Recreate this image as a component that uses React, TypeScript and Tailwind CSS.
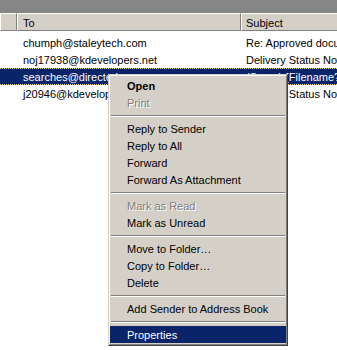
import React from "react";

type Item =
  | { kind: "item"; label: string; bold?: boolean; disabled?: boolean; active?: boolean }
  | { kind: "sep" };

const items: Item[] = [
  { kind: "item", label: "Open", bold: true },
  { kind: "item", label: "Print", disabled: true },
  { kind: "sep" },
  { kind: "item", label: "Reply to Sender" },
  { kind: "item", label: "Reply to All" },
  { kind: "item", label: "Forward" },
  { kind: "item", label: "Forward As Attachment" },
  { kind: "sep" },
  { kind: "item", label: "Mark as Read", disabled: true },
  { kind: "item", label: "Mark as Unread" },
  { kind: "sep" },
  { kind: "item", label: "Move to Folder\u2026" },
  { kind: "item", label: "Copy to Folder\u2026" },
  { kind: "item", label: "Delete" },
  { kind: "sep" },
  { kind: "item", label: "Add Sender to Address Book" },
  { kind: "sep" },
  { kind: "item", label: "Properties", active: true },
];

const rows = [
  { to: "chumph@staleytech.com", subject: "Re: Approved document" },
  { to: "noj17938@kdevelopers.net", subject: "Delivery Status Notification" },
  { to: "searches@directedge.com", subject: "(Spam) {Filename?}", selected: true },
  { to: "j20946@kdevelopers.net", subject: "Delivery Status Notification" },
];

export default function App() {
  return (
    <div
      className="relative w-[337px] h-[350px] overflow-hidden bg-white text-[11px] leading-[13px] text-black"
      style={{ fontFamily: '"Liberation Sans", Arial, sans-serif' }}
    >
      <div className="h-[13px] bg-[#868686]" />
      <div className="flex h-[18px] bg-[#d4d0c8]">
        <div className="w-[17px] shrink-0 border-t border-l border-white border-r border-r-[#808080] border-b border-b-[#808080]" />
        <div className="w-[224px] shrink-0 flex items-center pt-[2px] pl-[5px] border-t border-l border-white border-r border-r-[#808080] border-b border-b-[#808080]">
          To
        </div>
        <div className="flex-1 flex items-center pt-[2px] pl-[4px] whitespace-nowrap border-t border-l border-white border-b border-b-[#808080]">
          Subject
        </div>
      </div>
      <div className="pt-[3px]">
        {rows.map((r) => (
          <div
            key={r.to}
            className={
              r.selected
                ? "flex h-[17px] items-center pt-[1px] whitespace-nowrap bg-[#0a246a] text-white border-y border-dotted border-[#f5db95]"
                : "flex h-[17px] items-center pt-[1px] whitespace-nowrap"
            }
          >
            <div className="w-[17px] shrink-0" />
            <div className="w-[224px] shrink-0 overflow-hidden pl-[6px]">{r.to}</div>
            <div className="flex-1 overflow-hidden pl-[5px]">{r.subject}</div>
          </div>
        ))}
      </div>

      <div className="absolute left-[108px] top-[74px] w-[180px] border border-t-[#d4d0c8] border-l-[#d4d0c8] border-r-[#404040] border-b-[#404040] bg-[#d4d0c8]">
        <div className="border border-t-white border-l-white border-r-[#808080] border-b-[#808080] py-[1px]">
          {items.map((it, i) =>
            it.kind === "sep" ? (
              <div key={i} className="h-[9px] flex items-center px-[1px]">
                <div className="w-full h-[2px] border-t border-t-[#808080] border-b border-b-white" />
              </div>
            ) : (
              <div
                key={i}
                className={
                  "h-[17px] flex items-center pt-[1px] pl-[17px] whitespace-nowrap " +
                  (it.active ? "bg-[#0a246a] text-white " : "") +
                  (it.bold ? "font-bold " : "") +
                  (it.disabled ? "text-[#808080] [text-shadow:1px_1px_0_#ffffff]" : "")
                }
              >
                {it.label}
              </div>
            )
          )}
        </div>
      </div>
    </div>
  );
}
